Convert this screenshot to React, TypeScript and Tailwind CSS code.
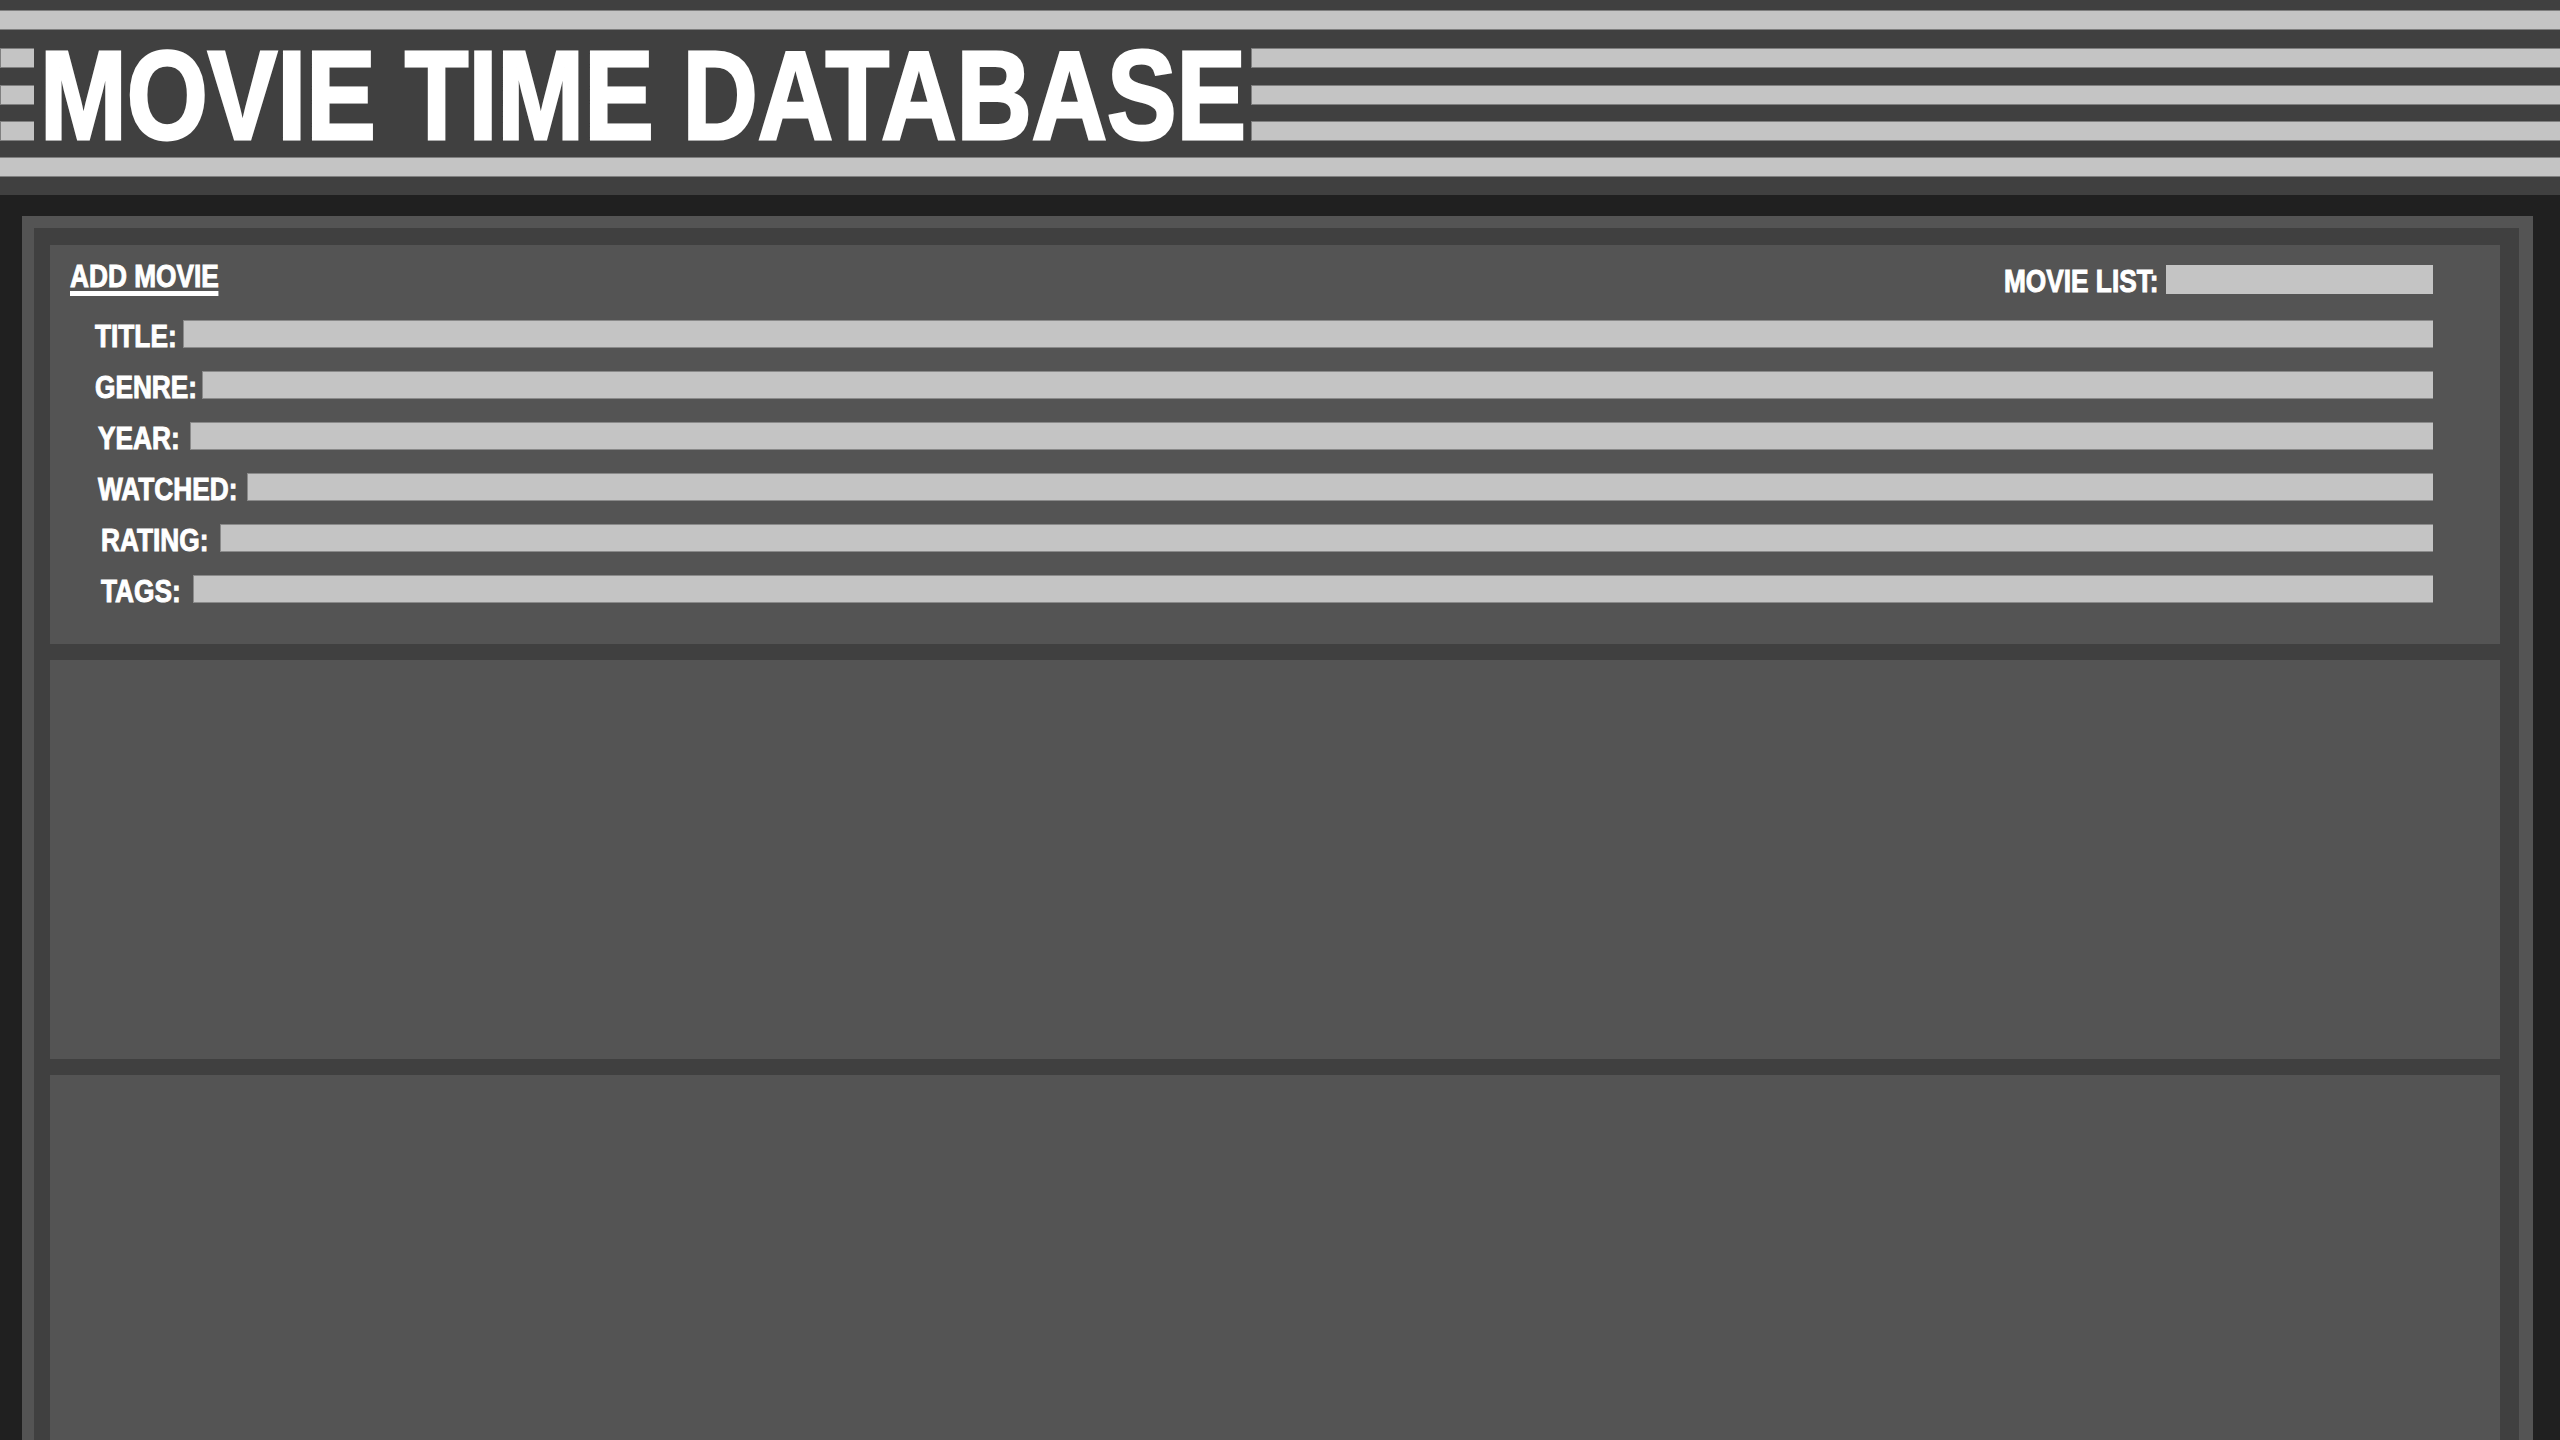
const arial = { fontFamily: '"Liberation Sans", Arial, sans-serif' }

// label column widths taken so every bar starts where the reference has it
const fields = [
    { label: 'TITLE', indent: 0, width: 88 },
    { label: 'GENRE', indent: 0, width: 107 },
    { label: 'YEAR', indent: 3, width: 92 },
    { label: 'WATCHED', indent: 3, width: 149 },
    { label: 'RATING', indent: 6, width: 119 },
    { label: 'TAGS', indent: 6, width: 92 },
]

function Stripe({ className = '' }: { className?: string }) {
    return <div className={`h-[20px] border-y border-l border-[#7f7f7f] bg-[#c4c4c4] ${className}`} />
}

function StripeStack({ className = '' }: { className?: string }) {
    return (
        <div className={`flex h-[93px] flex-col justify-between ${className}`}>
            <Stripe />
            <Stripe />
            <Stripe />
        </div>
    )
}

function Header() {
    return (
        <header className="flex h-[195px] flex-col bg-[#404040] pt-[10px]">
            <Stripe className="h-[19px] border-l-0" />
            <div className="mt-[18px] flex h-[93px] items-start">
                <StripeStack className="w-[34px]" />
                <h1 className="ml-[6px] mr-[7px] h-[93px] w-[1204px] shrink-0 text-[126px] font-bold leading-[95px] text-white [-webkit-text-stroke:3px_white]">
                    <span className="inline-block origin-left scale-x-[0.827] whitespace-nowrap">MOVIE TIME DATABASE</span>
                </h1>
                <StripeStack className="flex-1" />
            </div>
            <Stripe className="mt-[16px] h-[19px] border-l-0" />
        </header>
    )
}

function FieldRow({ label, indent, width }: { label: string; indent: number; width: number }) {
    return (
        <div className="flex h-[28px] items-start">
            <span
                className="h-[28px] shrink-0 text-[32px] font-bold leading-[32px] text-white [-webkit-text-stroke:1px_white]"
                style={{ width, marginLeft: indent }}
            >
                <span className="inline-block origin-left scale-x-[0.82] whitespace-nowrap">{label}:</span>
            </span>
            <div className="h-[28px] flex-1 border-y border-l border-[#8a8a8a] bg-[#c4c4c4]" />
        </div>
    )
}

function AddMoviePanel() {
    return (
        <section className="h-[399px] bg-[#545454] pl-[20px] pr-[67px] pt-[17px]">
            <div className="flex items-start justify-between">
                <div className="w-[148px] text-[32px] font-bold leading-[28px] text-white [-webkit-text-stroke:1px_white]">
                    <span className="inline-block origin-left scale-x-[0.82] whitespace-nowrap border-b-[5px] border-white pb-[1px]">
                        ADD MOVIE
                    </span>
                </div>
                <div className="mt-[3px] flex items-start">
                    <span className="h-[29px] w-[162px] text-[32px] font-bold leading-[32px] text-white [-webkit-text-stroke:1px_white]">
                        <span className="inline-block origin-left scale-x-[0.82] whitespace-nowrap">MOVIE LIST:</span>
                    </span>
                    <div className="h-[29px] w-[267px] bg-[#c4c4c4]" />
                </div>
            </div>
            <div className="ml-[25px] mt-[24px] flex flex-col gap-[23px]">
                {fields.map((f) => (
                    <FieldRow key={f.label} label={f.label} indent={f.indent} width={f.width} />
                ))}
            </div>
        </section>
    )
}

export default function App() {
    return (
        <div className="min-h-screen bg-[#202020]" style={arial}>
            <Header />
            <main className="pb-[40px] pl-[22px] pr-[27px] pt-[21px]">
                <div className="border-b-[12px] border-l-[12px] border-r-[14px] border-t-[12px] border-[#545454]">
                    <div className="flex flex-col gap-4 bg-[#404040] pb-[17px] pl-[16px] pr-[19px] pt-[17px]">
                        <AddMoviePanel />
                        <section className="h-[399px] bg-[#545454]" />
                        <section className="h-[399px] bg-[#545454]" />
                    </div>
                </div>
            </main>
        </div>
    )
}
